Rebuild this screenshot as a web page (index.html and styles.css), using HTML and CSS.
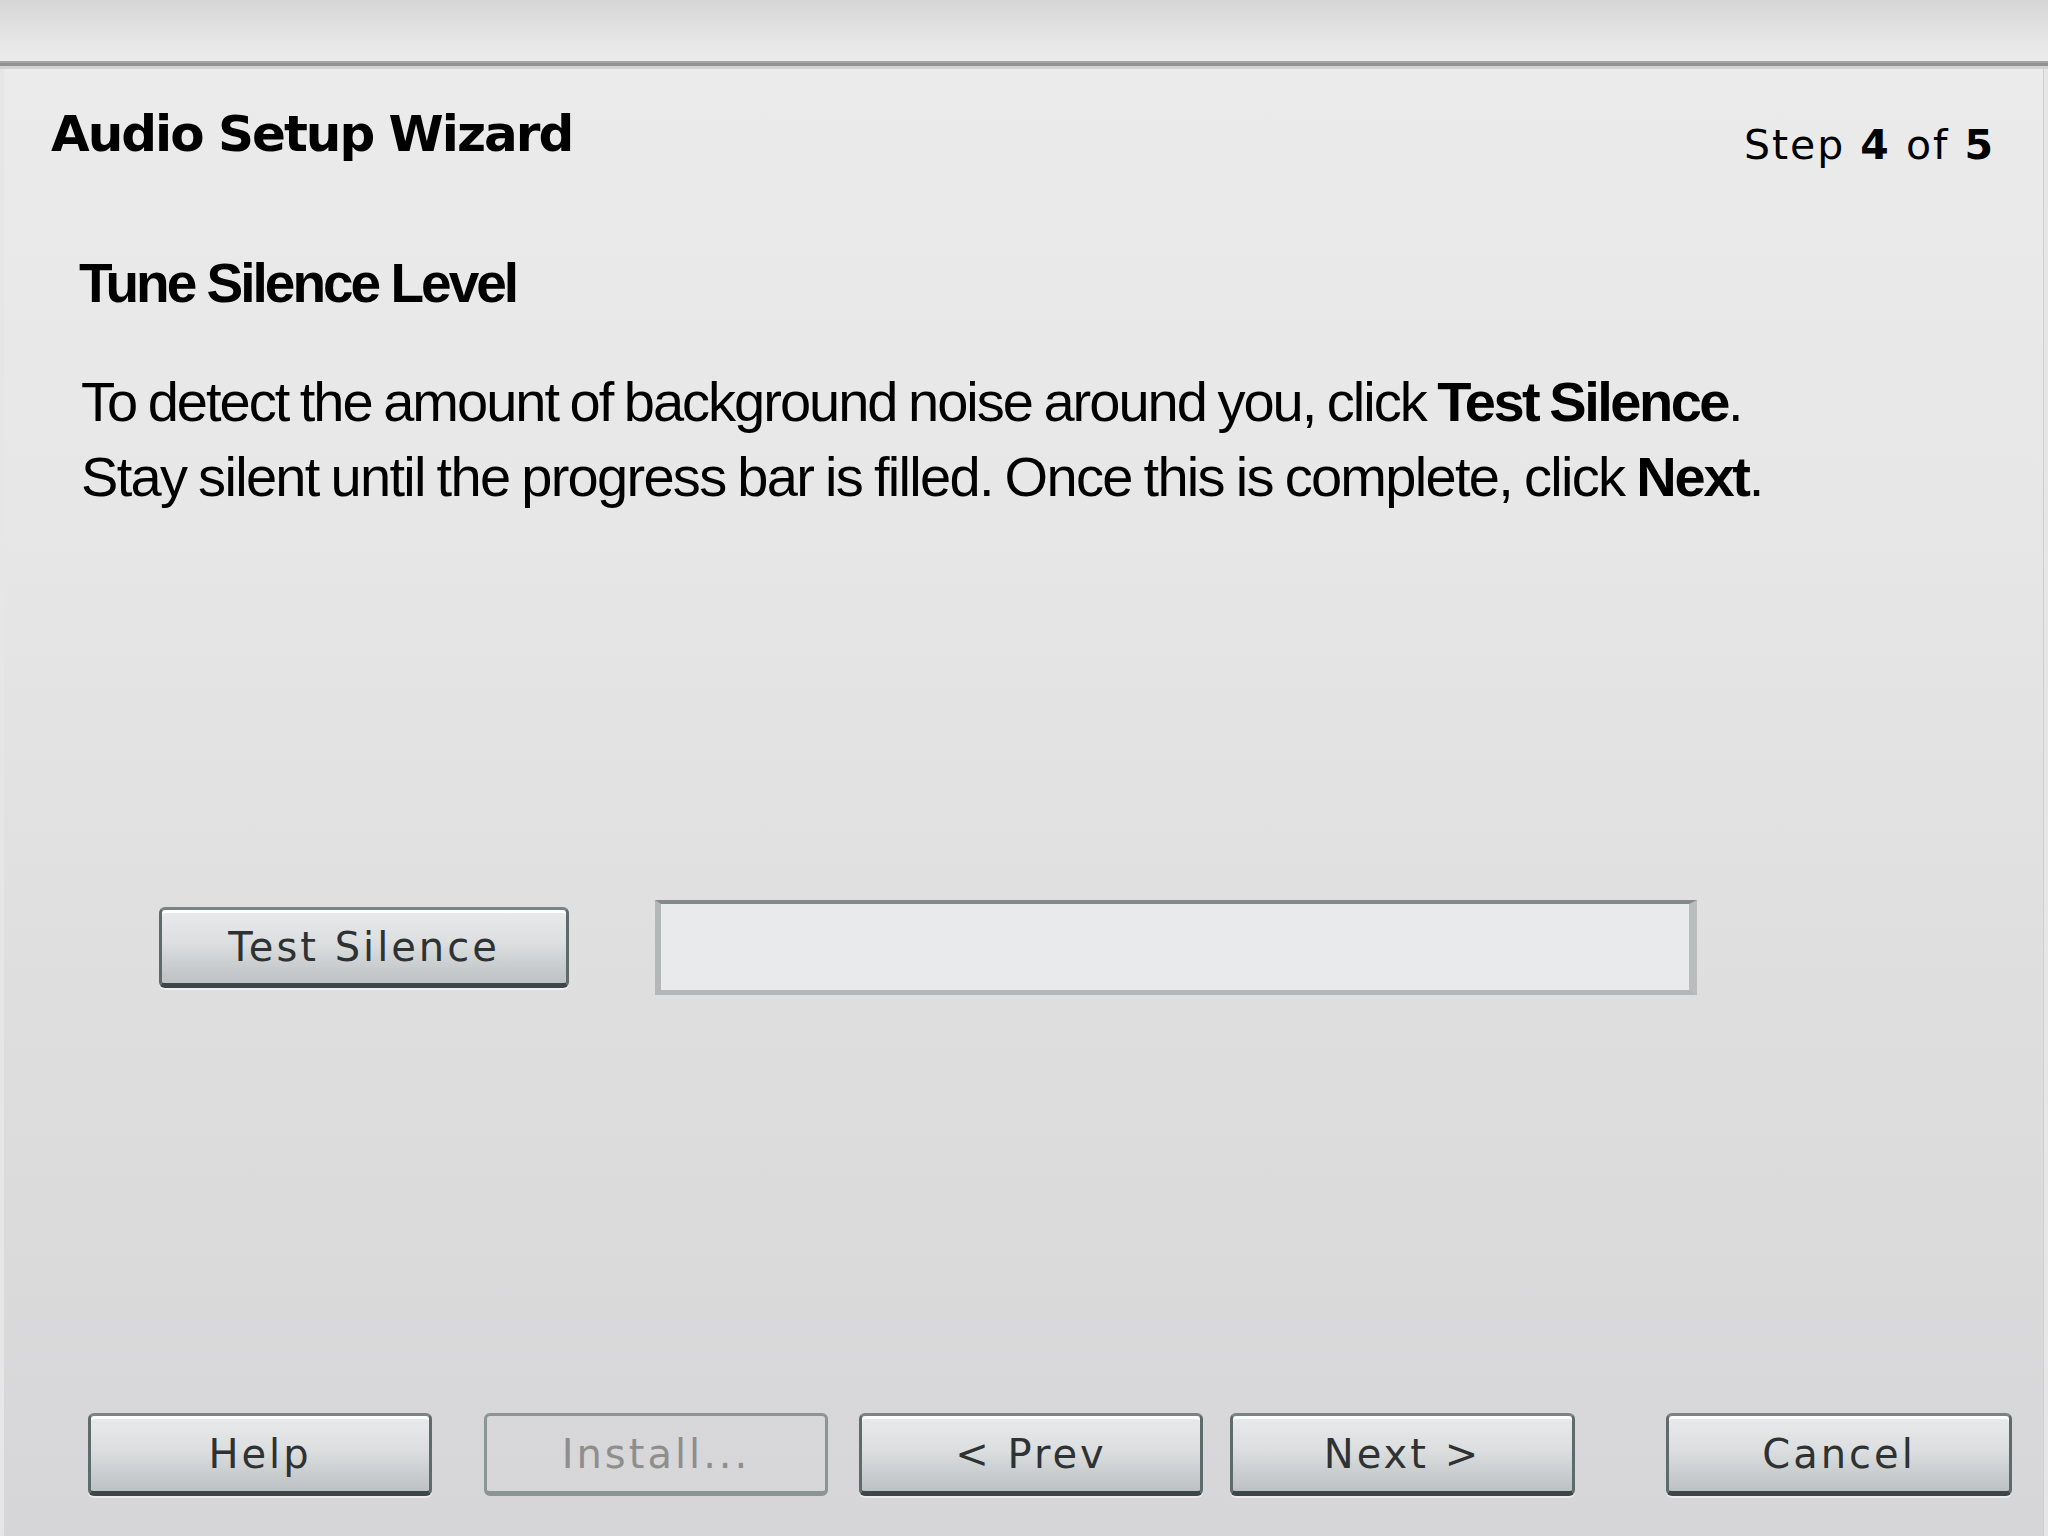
FILE: index.html
```html
<!DOCTYPE html>
<html lang="en">
<head>
<meta charset="utf-8">
<title>Audio Setup Wizard</title>
<link rel="stylesheet" href="styles.css">
</head>
<body>
<div class="topbar"></div>
<div class="divider"></div>
<div class="panel">
  <div class="header">
    <div class="title">Audio Setup Wizard</div>
    <div class="step">Step <b>4</b> of <b>5</b></div>
  </div>
  <h2 class="heading">Tune Silence Level</h2>
  <p class="desc">To detect the amount of background noise around you, click <b>Test Silence</b>.<br><span class="line-two">Stay silent until the progress bar is filled. Once this is complete, click <b>Next</b>.</span></p>
  <div class="test-row">
    <button class="btn btn-test">Test Silence</button>
    <div class="progress"></div>
  </div>
  <div class="footer">
    <button class="btn btn-help">Help</button>
    <button class="btn btn-install" disabled>Install...</button>
    <button class="btn btn-prev">&lt; Prev</button>
    <button class="btn btn-next">Next &gt;</button>
    <button class="btn btn-cancel">Cancel</button>
  </div>
</div>
</body>
</html>
```
FILE: styles.css
```css
html, body {
  margin: 0;
  padding: 0;
}
body {
  width: 2048px;
  height: 1536px;
  overflow: hidden;
  background: #e6e6e6;
  font-family: "DejaVu Sans", sans-serif;
  color: #000;
}
.topbar {
  height: 61px;
  background: linear-gradient(to bottom, #d6d6d6 0%, #e2e2e2 50%, #ececec 100%);
}
.divider {
  height: 2px;
  background: #a4a4a4;
  border-bottom: 3px solid #929292;
  box-shadow: 0 3px 0 #d2d2d2;
}
.panel {
  margin: 3px 4px 0 4px;
  height: 1467px;
  box-sizing: border-box;
  padding: 40px 0 40px 0;
  background: linear-gradient(to bottom, #ebebeb 0%, #e7e7e7 30%, #dfdfdf 60%, #d6d6d8 100%);
  border-right: 1px solid #cfcfcf;
  display: flex;
  flex-direction: column;
}
.header {
  display: flex;
  justify-content: space-between;
  align-items: flex-start;
  height: 50px;
  padding: 0 48px 0 47px;
}
.title {
  font-weight: bold;
  font-size: 50px;
  line-height: 50px;
  letter-spacing: -2px;
}
.step {
  font-size: 41px;
  line-height: 41px;
  letter-spacing: 2px;
  margin-top: 16px;
}
.heading {
  margin: 96px 0 0 75px;
  font-family: "Liberation Sans", sans-serif;
  font-weight: bold;
  font-size: 55px;
  line-height: 56px;
  letter-spacing: -3px;
}
.desc {
  margin: 53px 0 0 77px;
  font-family: "Liberation Sans", sans-serif;
  font-size: 56px;
  line-height: 75px;
  letter-spacing: -2px;
  word-spacing: -2px;
}
.desc b {
  letter-spacing: -2.5px;
}
.desc .line-two {
  letter-spacing: -1.7px;
}
.desc .line-two b {
  letter-spacing: -2.2px;
}
.test-row {
  margin-top: 386px;
  display: flex;
  align-items: center;
  padding-left: 155px;
  height: 95px;
}
.btn {
  box-sizing: border-box;
  width: 344px;
  height: 83px;
  padding: 0;
  font-family: "DejaVu Sans", sans-serif;
  font-size: 40px;
  letter-spacing: 3px;
  color: #2f3233;
  border: 3px solid #5f6a6a;
  border-top-color: #7a8484;
  border-bottom: 5px solid #3d474b;
  border-radius: 6px;
  background: linear-gradient(to bottom, #e9eaeb 0%, #dcdedf 45%, #bcc1c3 100%);
  box-shadow: inset 0 3px 0 #ffffff, 0 2px 0 rgba(255,255,255,0.5);
}
.btn-test {
  width: 410px;
  height: 81px;
}
.progress {
  margin-left: 86px;
  width: 1042px;
  height: 95px;
  box-sizing: border-box;
  background: #e8eaeb;
  border-top: 4px solid #848989;
  border-left: 6px solid #b3b7b7;
  border-right: 8px solid #b9bdbd;
  border-bottom: 5px solid #b3b7b7;
}
.footer {
  margin-top: auto;
  display: flex;
  padding-left: 84px;
}
.btn-install {
  margin-left: 52px;
  background: transparent;
  border-color: #8c9494;
  border-bottom: 5px solid #8c9494;
  color: #8e8e8e;
  box-shadow: none;
}
.btn-prev {
  margin-left: 31px;
}
.btn-next {
  margin-left: 27px;
  width: 345px;
}
.btn-cancel {
  margin-left: 91px;
  width: 346px;
}
```
